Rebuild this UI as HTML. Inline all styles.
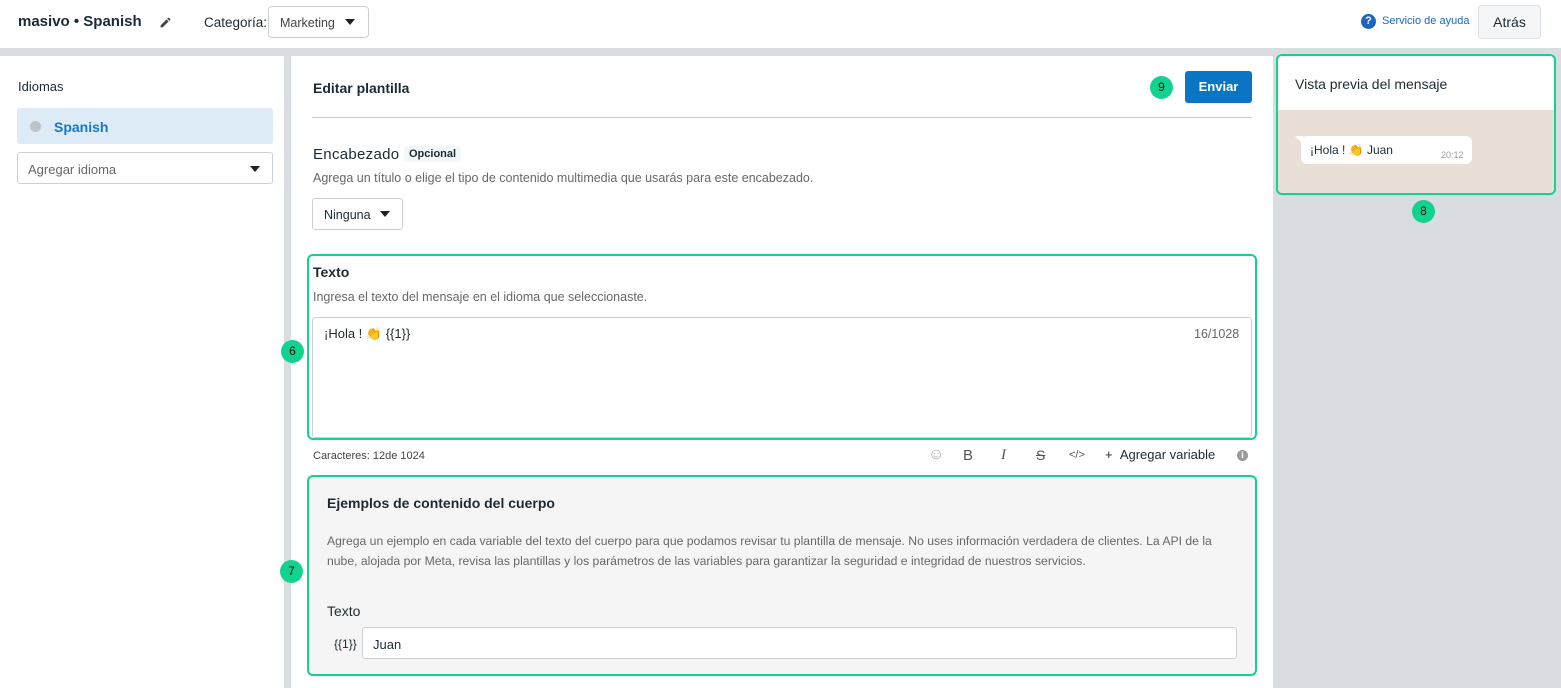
<!DOCTYPE html>
<html><head><meta charset="utf-8"><style>
*{box-sizing:border-box;margin:0;padding:0}
body{width:1561px;height:688px;overflow:hidden;background:#fff;font-family:"Liberation Sans",sans-serif;color:#1c2b33;position:relative}
.a{position:absolute}
.g{color:#65676b}
.badge{position:absolute;width:23px;height:23px;border-radius:50%;background:#11d38f;font-size:12px;text-align:center;line-height:23px;color:#111}
.gb{position:absolute;border:2px solid #11d38f;border-radius:6px}
</style></head><body>
<div class="a" style="left:0;top:48px;width:1561px;height:8px;background:#d9dde2"></div>
<div class="a" style="left:18px;top:13px;font-size:15px;font-weight:bold">masivo • Spanish</div>
<svg class="a" style="left:159px;top:16px" width="13" height="13" viewBox="0 0 24 24"><path d="M3 17.25V21h3.75L17.8 9.94l-3.75-3.75L3 17.25zM20.7 7.04a1 1 0 000-1.41l-2.34-2.34a1 1 0 00-1.41 0l-1.83 1.83 3.75 3.75 1.83-1.83z" fill="#444"/></svg>
<div class="a" style="left:204px;top:15px;font-size:13.5px">Categoría:</div>
<div class="a" style="left:268px;top:6px;width:101px;height:32px;border:1px solid #ccd0d5;border-radius:4px;font-size:12.5px;padding:9px 11px;color:#444">Marketing</div>
<div class="a" style="left:345px;top:19px;border-left:5px solid transparent;border-right:5px solid transparent;border-top:6px solid #222"></div>
<div class="a" style="left:1361px;top:14px;width:15px;height:15px;border-radius:50%;background:#1b65c1;color:#fff;font-size:11px;font-weight:bold;text-align:center;line-height:15px">?</div>
<div class="a" style="left:1382px;top:15px;font-size:11px;color:#1b65c1">Servicio de ayuda</div>
<div class="a" style="left:1478px;top:5px;width:63px;height:34px;border:1px solid #dde0e4;border-radius:4px;background:#f5f6f7;font-size:14px;text-align:center;line-height:32px">Atrás</div>
<div class="a" style="left:284px;top:56px;width:7px;height:632px;background:#d9dde2"></div>
<div class="a" style="left:18px;top:79px;font-size:13px">Idiomas</div>
<div class="a" style="left:17px;top:108px;width:256px;height:36px;background:#dcebf6;border-radius:3px"></div>
<div class="a" style="left:30px;top:121px;width:11px;height:11px;border-radius:50%;background:#bec3c9"></div>
<div class="a" style="left:54px;top:119px;font-size:14px;font-weight:bold;color:#1877c1">Spanish</div>
<div class="a" style="left:17px;top:152px;width:256px;height:32px;border:1px solid #ccd0d5;border-radius:3px;font-size:13px;padding:9px 10px"><span class="g">Agregar idioma</span></div>
<div class="a" style="left:250px;top:166px;border-left:5px solid transparent;border-right:5px solid transparent;border-top:6px solid #222"></div>
<div class="a" style="left:313px;top:80px;font-size:14px;font-weight:bold">Editar plantilla</div>
<div class="badge" style="left:1150px;top:76px">9</div>
<div class="a" style="left:1185px;top:71px;width:67px;height:32px;background:#0a76c3;border-radius:3px;color:#fff;font-size:13px;font-weight:bold;text-align:center;line-height:32px">Enviar</div>
<div class="a" style="left:312px;top:117px;width:940px;height:1px;background:#ccd0d5"></div>
<div class="a" style="left:313px;top:146px;font-size:15px;letter-spacing:.3px">Encabezado</div>
<div class="a" style="left:404px;top:146px;padding:2px 5px;background:#f2f7fa;font-size:11px;font-weight:bold;border-radius:3px">Opcional</div>
<div class="a g" style="left:313px;top:171px;font-size:12.5px">Agrega un título o elige el tipo de contenido multimedia que usarás para este encabezado.</div>
<div class="a" style="left:312px;top:198px;width:91px;height:32px;border:1px solid #ccd0d5;border-radius:3px;font-size:12.5px;padding:9px 11px">Ninguna</div>
<div class="a" style="left:380px;top:211px;border-left:5px solid transparent;border-right:5px solid transparent;border-top:6px solid #222"></div>
<div class="gb" style="left:307px;top:254px;width:950px;height:186px"></div>
<div class="badge" style="left:281px;top:340px">6</div>
<div class="a" style="left:313px;top:264px;font-size:14px;font-weight:bold">Texto</div>
<div class="a g" style="left:313px;top:290px;font-size:12.5px">Ingresa el texto del mensaje en el idioma que seleccionaste.</div>
<div class="a" style="left:312px;top:317px;width:940px;height:121px;border:1px solid #ccd0d5;border-radius:3px"></div>
<div class="a" style="left:324px;top:326px;font-size:13px">¡Hola ! 👏 {{1}}</div>
<div class="a g" style="left:1194px;top:327px;font-size:12.5px">16/1028</div>
<div class="a" style="left:313px;top:450px;font-size:11px;color:#444">Caracteres: 12de 1024</div>
<div class="a" style="left:928px;top:446px;font-size:16px;color:#aaa">☺</div>
<div class="a" style="left:963px;top:447px;font-size:15px;color:#555">B</div>
<div class="a" style="left:1001px;top:447px;font-size:15px;color:#555;font-family:'Liberation Serif',serif;font-style:italic">I</div>
<div class="a" style="left:1036px;top:447px;font-size:14px;color:#555;text-decoration:line-through">S</div>
<div class="a" style="left:1069px;top:449px;font-size:11px;color:#555">&lt;/&gt;</div>
<div class="a" style="left:1105px;top:447px;font-size:13px">+&nbsp;&nbsp;Agregar variable</div>
<div class="a" style="left:1237px;top:450px;width:11px;height:11px;border-radius:50%;background:#999;color:#fff;font-size:9px;font-weight:bold;text-align:center;line-height:11px">i</div>
<div class="gb" style="left:307px;top:475px;width:950px;height:201px;background:#f5f5f5"></div>
<div class="badge" style="left:280px;top:560px">7</div>
<div class="a" style="left:327px;top:495px;font-size:14px;font-weight:bold">Ejemplos de contenido del cuerpo</div>
<div class="a g" style="left:327px;top:531px;width:915px;font-size:12.2px;line-height:20px">Agrega un ejemplo en cada variable del texto del cuerpo para que podamos revisar tu plantilla de mensaje. No uses información verdadera de clientes. La API de la nube, alojada por Meta, revisa las plantillas y los parámetros de las variables para garantizar la seguridad e integridad de nuestros servicios.</div>
<div class="a" style="left:327px;top:603px;font-size:14px">Texto</div>
<div class="a" style="left:334px;top:637px;font-size:12px">{{1}}</div>
<div class="a" style="left:362px;top:627px;width:875px;height:32px;border:1px solid #ccd0d5;border-radius:3px;background:#fff;font-size:13px;padding:9px 10px">Juan</div>
<div class="a" style="left:1273px;top:56px;width:288px;height:632px;background:#d9dde2"></div>
<div class="a" style="left:1277px;top:55px;width:278px;height:140px;background:#fff;border-radius:6px;overflow:hidden">
<div class="a" style="left:0;top:55px;width:278px;height:85px;background:#e8e0d6"></div>
</div>
<div class="gb" style="left:1276px;top:54px;width:280px;height:141px"></div>
<div class="a" style="left:1295px;top:76px;font-size:14px">Vista previa del mensaje</div>
<div class="a" style="left:1301px;top:136px;width:171px;height:28px;background:#fff;border-radius:6px"></div>
<div class="a" style="left:1295px;top:136px;border-left:8px solid transparent;border-top:8px solid #fff"></div>
<div class="a" style="left:1310px;top:143px;font-size:12px">¡Hola ! 👏 Juan</div>
<div class="a" style="left:1441px;top:150px;font-size:9px;color:#999">20:12</div>
<div class="badge" style="left:1412px;top:200px">8</div>
</body></html>
